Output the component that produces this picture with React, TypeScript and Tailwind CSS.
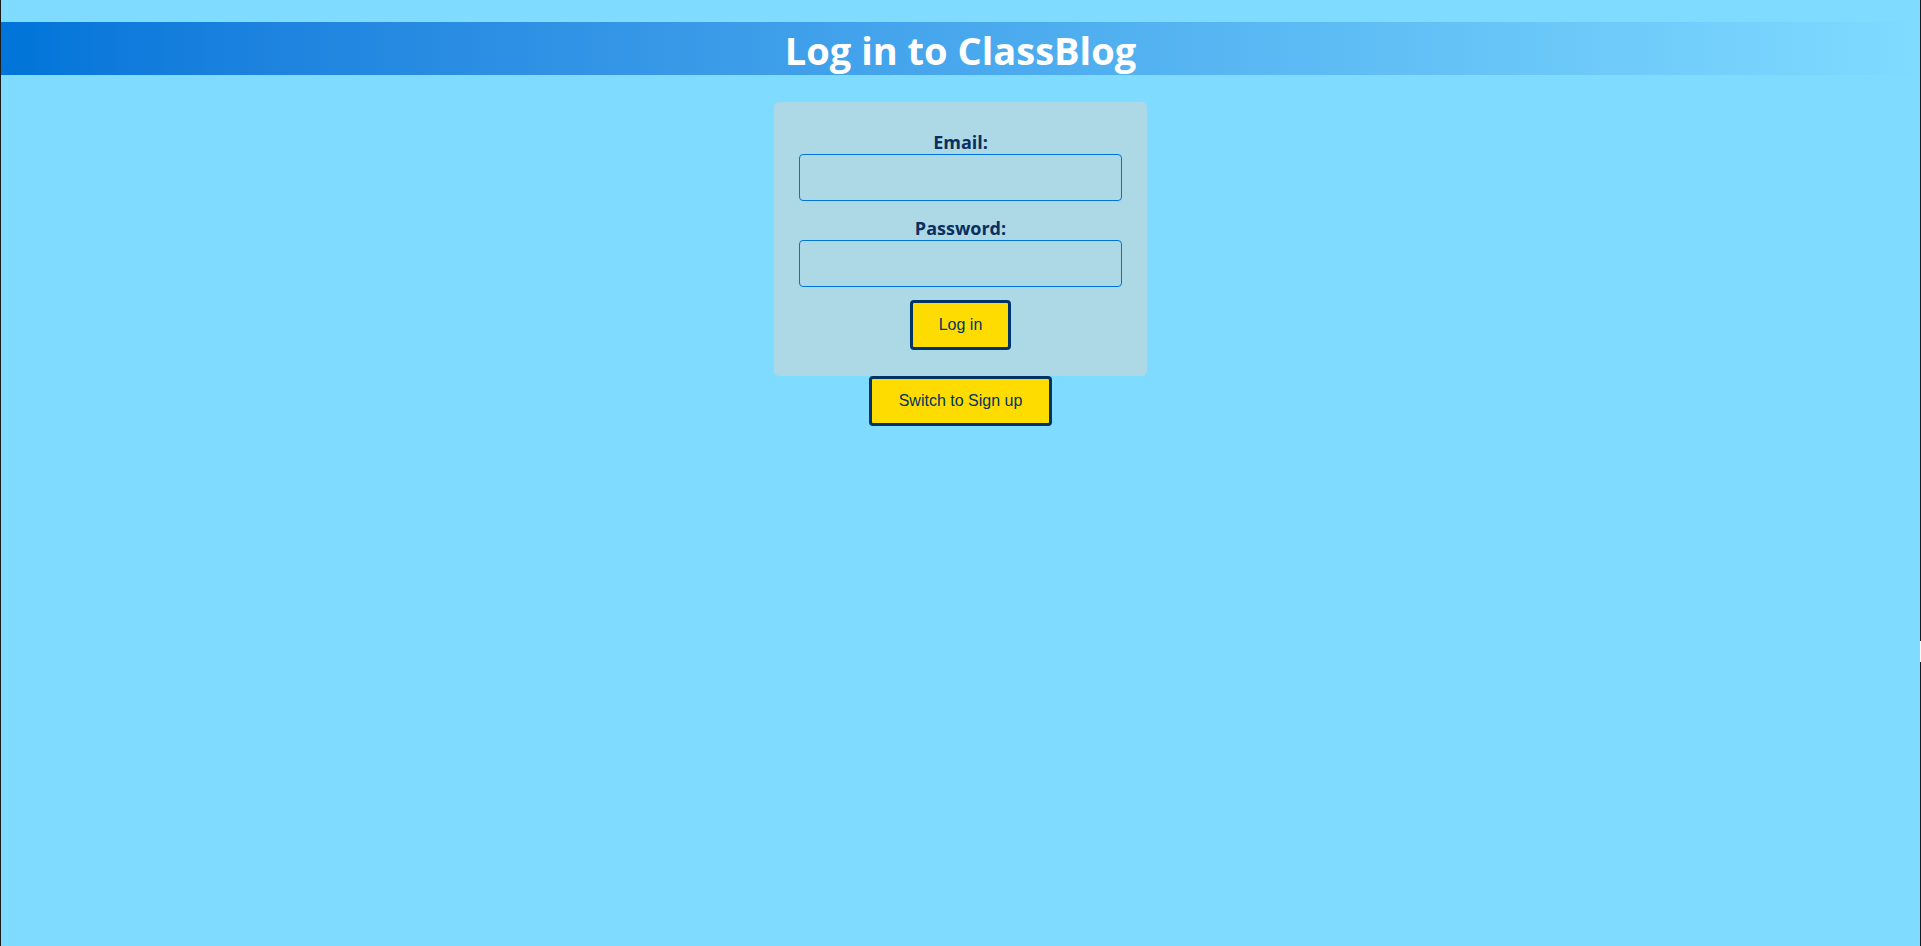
import { useState } from "react";

export default function App() {
  const [email, setEmail] = useState("");
  const [password, setPassword] = useState("");

  return (
    <div className="relative min-h-screen border-x border-[#1b1b1b] bg-[#7fdbff] pt-[22px] font-['Open_Sans',sans-serif]">
      <header className="h-[53px] bg-linear-to-r from-[#0074d9] to-[#7fdbff]">
        <h1 className="pt-[3px] text-center text-[38px] font-bold leading-[50px] text-white">
          Log in to ClassBlog
        </h1>
      </header>

      <main className="flex flex-col items-center pt-[27px]">
        <form
          className="flex w-[373px] flex-col items-center rounded-[5px] bg-[#add8e6] px-[25px] pt-[28px] pb-[26px]"
          onSubmit={(e) => e.preventDefault()}
        >
          <label
            htmlFor="email"
            className="block text-[18px] font-bold leading-[24px] text-[#0b2f5e]"
          >
            Email:
          </label>
          <input
            id="email"
            type="email"
            value={email}
            onChange={(e) => setEmail(e.target.value)}
            className="h-[47px] w-full rounded-[4px] border border-[#0074d9] bg-transparent px-2 outline-none"
          />

          <label
            htmlFor="password"
            className="mt-[15px] block text-[18px] font-bold leading-[24px] text-[#0b2f5e]"
          >
            Password:
          </label>
          <input
            id="password"
            type="password"
            value={password}
            onChange={(e) => setPassword(e.target.value)}
            className="h-[47px] w-full rounded-[4px] border border-[#0074d9] bg-transparent px-2 outline-none"
          />

          <button
            type="submit"
            className="mt-[13px] h-[50px] rounded-[4px] border-[3px] border-[#003366] bg-[#ffdc00] px-[26px] font-['Liberation_Sans',Arial,sans-serif] text-[16px] text-[#003366]"
          >
            Log in
          </button>
        </form>

        <button
          type="button"
          className="h-[50px] rounded-[4px] border-[3px] border-[#003366] bg-[#ffdc00] px-[27px] font-['Liberation_Sans',Arial,sans-serif] text-[16px] text-[#003366]"
        >
          Switch to Sign up
        </button>
      </main>

      <span className="absolute top-[641px] -right-px h-[21px] w-px bg-white" />
    </div>
  );
}
